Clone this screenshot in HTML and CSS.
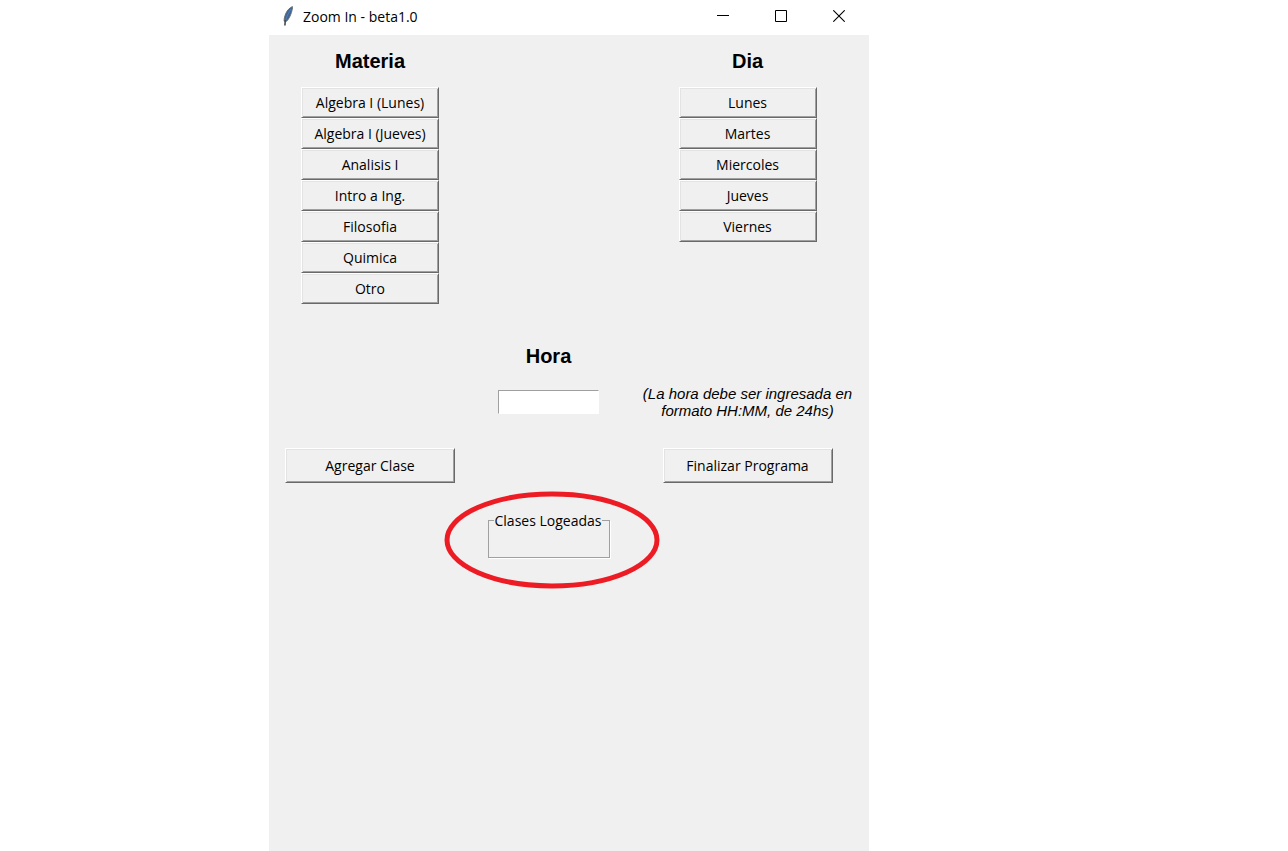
FILE: index.html
```html
<!DOCTYPE html>
<html lang="es">
<head>
<meta charset="utf-8">
<title>Zoom In - beta1.0</title>
<meta name="viewport" content="width=device-width, initial-scale=1">
<link rel="stylesheet" href="styles.css">
</head>
<body>
<div class="desktop">
  <div class="window">
    <header class="titlebar">
      <svg class="feather" width="14" height="20" viewBox="0 0 14 20" aria-hidden="true">
        <path d="M11.400 0.600C8.500 1.800 6 4.500 4.600 8C3.600 10.800 2.900 13 3.200 15.200L5.200 15.600C7.600 13.600 9.400 10 10.400 6.500C11.100 4.200 11.600 2.200 11.400 0.600Z" fill="#3c6699" stroke="#6a6d72" stroke-width="1"/>
        <path d="M10 3C7.500 6.500 5.500 11 4.300 15.500" fill="none" stroke="#5580b0" stroke-width="1"/>
        <path d="M4.300 14L3.900 19.500" fill="none" stroke="#4a4a4e" stroke-width="1.600"/>
      </svg>
      <h1 class="title">Zoom In - beta1.0</h1>
      <div class="controls">
        <button class="control" type="button" aria-label="Minimizar">
          <svg width="12" height="12" viewBox="0 0 12 12"><path d="M0 5.500H12" stroke="#000"/></svg>
        </button>
        <button class="control" type="button" aria-label="Maximizar">
          <svg width="12" height="12" viewBox="0 0 12 12"><path d="M.5 .5H11.500V11.500H.5Z" fill="none" stroke="#000"/></svg>
        </button>
        <button class="control" type="button" aria-label="Cerrar">
          <svg width="12" height="12" viewBox="0 0 12 12"><path d="M.3 .3L11.700 11.700M11.700 .3L.3 11.700" stroke="#000" stroke-width="1.100"/></svg>
        </button>
      </div>
    </header>
    <main class="content">
      <section class="row choices">
        <div class="group first">
          <h2 class="heading">Materia</h2>
          <div class="options">
            <button class="button" type="button">Algebra I (Lunes)</button>
            <button class="button" type="button">Algebra I (Jueves)</button>
            <button class="button" type="button">Analisis I</button>
            <button class="button" type="button">Intro a Ing.</button>
            <button class="button" type="button">Filosofia</button>
            <button class="button" type="button">Quimica</button>
            <button class="button" type="button">Otro</button>
          </div>
        </div>
        <div class="group last">
          <h2 class="heading">Dia</h2>
          <div class="options">
            <button class="button" type="button">Lunes</button>
            <button class="button" type="button">Martes</button>
            <button class="button" type="button">Miercoles</button>
            <button class="button" type="button">Jueves</button>
            <button class="button" type="button">Viernes</button>
          </div>
        </div>
      </section>
      <section class="row time">
        <label class="heading middle" for="hora">Hora</label>
        <input class="entry middle" id="hora" type="text" aria-describedby="formato">
        <p class="hint last" id="formato">(La hora debe ser ingresada en<br>formato HH:MM, de 24hs)</p>
      </section>
      <section class="row actions">
        <button class="button large first" type="button">Agregar Clase</button>
        <button class="button large last" type="button">Finalizar Programa</button>
      </section>
      <section class="row">
        <div class="logged middle">
          <fieldset class="frame">
            <legend class="legend">Clases Logeadas</legend>
          </fieldset>
          <svg class="mark" width="216" height="98" viewBox="0 0 216 98" aria-hidden="true">
            <ellipse cx="108" cy="49" rx="105" ry="46" fill="none" stroke="#ed1c24" stroke-width="5"/>
          </svg>
        </div>
      </section>
    </main>
  </div>
</div>
</body>
</html>
```
FILE: styles.css
```css
* {
  box-sizing: border-box;
}

body {
  margin: 0;
  background: #fff;
  color: #000;
  font-family: "Open Sans", "Noto Sans", sans-serif;
  font-size: 14px;
  line-height: 20px;
}

.desktop {
  display: grid;
  grid-template-columns: 269fr 600fr 419fr;
  min-height: 100vh;
}

.window {
  grid-column: 2;
  display: flex;
  flex-direction: column;
}

.titlebar {
  display: flex;
  align-items: center;
  height: 35px;
  padding: 0 1px 3px 12px;
}

.feather {
  flex: none;
}

.title {
  flex: 1;
  margin: 2px 0 0 8px;
  font-size: 14px;
  font-weight: 400;
}

.controls {
  display: flex;
}

.control {
  display: flex;
  align-items: center;
  justify-content: center;
  width: 58px;
  height: 32px;
  padding: 0;
  border: 0;
  background: none;
}

.content {
  flex: 1;
  padding-top: 12px;
  background: #f0f0f0;
}

.row {
  display: grid;
  grid-template-columns: 202fr 155fr 243fr;
  justify-items: center;
  align-items: start;
}

.first {
  grid-column: 1;
}

.middle {
  grid-column: 2;
}

.last {
  grid-column: 3;
}

.heading {
  margin: 0;
  font-family: "Liberation Sans", Arial, sans-serif;
  font-size: 20px;
  font-weight: 700;
  line-height: 28px;
  text-align: center;
}

.options {
  display: flex;
  flex-direction: column;
  width: 138px;
  margin-top: 12px;
}

.button {
  height: 31px;
  padding: 0;
  border: 1px solid;
  border-color: #fff #696969 #696969 #fff;
  background: #f0f0f0;
  box-shadow: inset 1px 1px #e3e3e3, inset -1px -1px #a0a0a0;
  color: #000;
  font: inherit;
}

.large {
  width: 170px;
  height: 35px;
}

.time {
  margin-top: 38px;
  align-items: center;
  row-gap: 15px;
}

.entry {
  width: 101px;
  height: 24px;
  padding: 0 4px;
  border: 1px solid;
  border-color: #a0a0a0 #fff #fff #a0a0a0;
  background: #fff;
  font: inherit;
}

.hint {
  margin: 0;
  font-family: "Liberation Sans", Arial, sans-serif;
  font-size: 15px;
  font-style: italic;
  line-height: 17px;
  text-align: center;
  white-space: nowrap;
}

.actions {
  margin-top: 29px;
}

.logged {
  position: relative;
  margin-top: 26px;
}

.frame {
  width: 122px;
  height: 49px;
  margin: 0;
  padding: 0 5px;
  border: 1px solid #a0a0a0;
  box-shadow: 1px 1px #fff;
}

.legend {
  padding: 2px 1px 0;
  white-space: nowrap;
}

.mark {
  position: absolute;
  top: -18px;
  left: -44px;
  pointer-events: none;
}
```
